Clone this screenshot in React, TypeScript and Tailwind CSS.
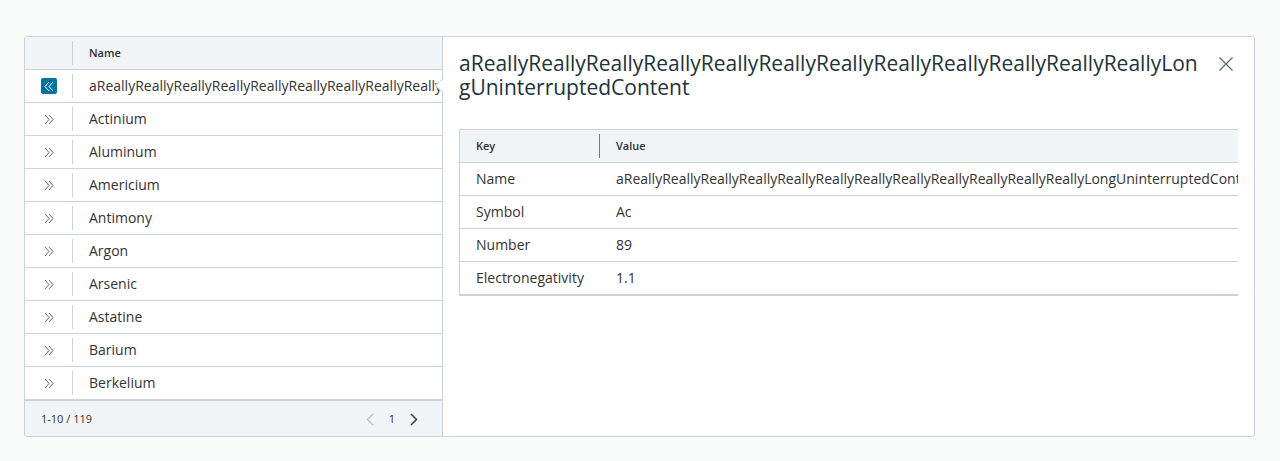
import React from "react";

const names = [
  "aReallyReallyReallyReallyReallyReallyReallyReallyReallyReallyReallyReallyLongUninterruptedContent",
  "Actinium",
  "Aluminum",
  "Americium",
  "Antimony",
  "Argon",
  "Arsenic",
  "Astatine",
  "Barium",
  "Berkelium",
];

const details: [string, string][] = [
  ["Name", names[0]],
  ["Symbol", "Ac"],
  ["Number", "89"],
  ["Electronegativity", "1.1"],
];

function ChevronsRight({ className }: { className?: string }) {
  return (
    <svg width="10" height="11" viewBox="0 0 10 11" fill="none" className={className}>
      <path d="M1 1 L5 5.5 L1 10" stroke="currentColor" strokeWidth="1" />
      <path d="M5 1 L9 5.5 L5 10" stroke="currentColor" strokeWidth="1" />
    </svg>
  );
}

function ChevronsLeft({ className }: { className?: string }) {
  return (
    <svg width="10" height="11" viewBox="0 0 10 11" fill="none" className={className}>
      <path d="M5 1 L1 5.5 L5 10" stroke="currentColor" strokeWidth="1" />
      <path d="M9 1 L5 5.5 L9 10" stroke="currentColor" strokeWidth="1" />
    </svg>
  );
}

export default function App() {
  return (
    <div className="min-h-screen bg-[#fafbfb] pt-[36px] pl-[24px] pr-[25px] font-['Open_Sans',sans-serif] text-[#333333]">
      <div className="flex h-[401px] border border-[#ccd3d8] rounded-[3px] bg-white overflow-hidden">
        {/* Left grid */}
        <div className="w-[418px] flex flex-col border-r border-[#ccd3d8] shrink-0">
          <div className="h-[33px] shrink-0 bg-[#f1f5f7] border-b border-[#ccd3d8] flex items-center">
            <div className="w-[48px] h-[24px] border-r border-[#ccd3d8]" />
            <div className="pl-[16px] text-[11px] font-semibold text-[#313131]">Name</div>
          </div>
          {names.map((n, i) => (
            <div key={n} className="h-[33px] shrink-0 border-b border-[#ccd3d8] flex items-center">
              <div className="w-[48px] h-[24px] border-r border-[#ccd3d8] flex items-center justify-center">
                {i === 0 ? (
                  <div className="w-[16px] h-[16px] rounded-[2px] bg-[#0072a3] flex items-center justify-center text-white">
                    <ChevronsLeft />
                  </div>
                ) : (
                  <ChevronsRight className="text-[#5c6770]" />
                )}
              </div>
              <div className="pl-[16px] pb-[2px] text-[14px] whitespace-nowrap overflow-hidden flex-1 min-w-0">{n}</div>
            </div>
          ))}
          <div className="flex-1 bg-[#f1f5f7] border-t border-[#ccd3d8] flex items-center justify-between pl-[16px] pr-[24px] pt-[2px]">
            <span className="text-[11px] text-[#333]">1-10 / 119</span>
            <div className="flex items-center gap-[15px]">
              <svg width="8" height="13" viewBox="0 0 8 13" fill="none">
                <path d="M7 1 L1.5 6.5 L7 12" stroke="#b8bfc4" strokeWidth="1.2" />
              </svg>
              <span className="text-[11px] text-[#333]">1</span>
              <svg width="8" height="13" viewBox="0 0 8 13" fill="none">
                <path d="M1 1 L6.5 6.5 L1 12" stroke="#3b4a52" strokeWidth="1.6" />
              </svg>
            </div>
          </div>
        </div>

        {/* Detail pane */}
        <div className="relative flex-1 min-w-0 pt-[14px] pl-[16px] pr-[16px]">
          <div className="absolute left-[-6px] top-[44px] w-[9px] h-[9px] rotate-45 bg-white border-l border-b border-[#ccd3d8]" />
          <div className="flex items-start">
            <h3 className="flex-1 min-w-0 text-[21px] leading-[24px] text-[#21333b] font-normal whitespace-nowrap">
              aReallyReallyReallyReallyReallyReallyReallyReallyReallyReallyReallyReallyLon
              <br />
              gUninterruptedContent
            </h3>
            <button className="mt-[5px] mr-[4px] w-[16px] h-[16px] flex items-center justify-center text-[#5d6b73]">
              <svg width="16" height="16" viewBox="0 0 16 16" fill="none">
                <path d="M1.5 1.5 L14.5 14.5 M14.5 1.5 L1.5 14.5" stroke="currentColor" strokeWidth="1.3" />
              </svg>
            </button>
          </div>

          <div className="mt-[30px] border-l border-t border-b-2 border-[#ccd3d8] overflow-hidden">
            <div className="h-[33px] bg-[#f1f5f7] border-b border-[#ccd3d8] flex items-center">
              <div className="w-[140px] h-[24px] border-r border-[#6f7b83] flex items-center pl-[16px] text-[11px] font-semibold text-[#313131]">
                Key
              </div>
              <div className="pl-[16px] text-[11px] font-semibold text-[#313131]">Value</div>
            </div>
            {details.map(([k, v], i) => (
              <div
                key={k}
                className={
                  "flex items-center text-[14px] " +
                  (i < details.length - 1 ? "h-[33px] border-b border-[#ccd3d8]" : "h-[32px]")
                }
              >
                <div className="w-[140px] pl-[16px] pb-[2px] shrink-0 whitespace-nowrap">{k}</div>
                <div className="pl-[16px] pb-[2px] whitespace-nowrap overflow-hidden min-w-0 flex-1">{v}</div>
              </div>
            ))}
          </div>
        </div>
      </div>
    </div>
  );
}
